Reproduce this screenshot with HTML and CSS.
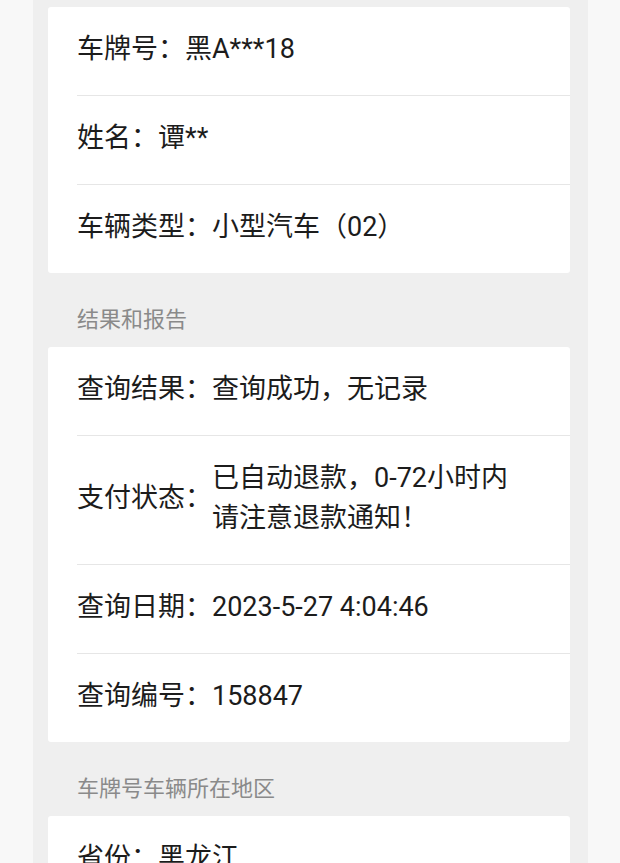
FILE: index.html
```html
<!DOCTYPE html>
<html lang="zh-CN">
  <head>
    <meta charset="UTF-8" />
    <meta name="viewport" content="width=device-width, initial-scale=1.0" />
    <title>查询结果</title>
    <link rel="stylesheet" href="styles.css">
  </head>
  <body>
    <div class="page">
      <div class="card">
        <div class="row">
          <span class="label">车牌号：</span>
          <span class="value">黑A***18</span>
        </div>
        <div class="row">
          <span class="label">姓名：</span>
          <span class="value">谭**</span>
        </div>
        <div class="row">
          <span class="label">车辆类型：</span>
          <span class="value">小型汽车（02）</span>
        </div>
      </div>

      <div class="group_title">结果和报告</div>
      <div class="card">
        <div class="row">
          <span class="label">查询结果：</span>
          <span class="value">查询成功，无记录</span>
        </div>
        <div class="row">
          <span class="label">支付状态：</span>
          <span class="value">已自动退款，0-72小时内<br />请注意退款通知！</span>
        </div>
        <div class="row">
          <span class="label">查询日期：</span>
          <span class="value">2023-5-27 4:04:46</span>
        </div>
        <div class="row">
          <span class="label">查询编号：</span>
          <span class="value">158847</span>
        </div>
      </div>

      <div class="group_title">车牌号车辆所在地区</div>
      <div class="card">
        <div class="row">
          <span class="label">省份：</span>
          <span class="value">黑龙江</span>
        </div>
      </div>
    </div>
  </body>
</html>
```

FILE: styles.css
```css
html,
body {
  margin: 0;
  padding: 0;
}
body {
  background-color: #f8f8f8;
  font-family: Roboto, "Noto Sans CJK SC", sans-serif;
  color: #1c1c1c;
}
.page {
  background-color: #efefef;
  margin: 0 32px 0 33px;
  padding: 7px 18px 0 15px;
}
.card {
  background-color: #fff;
  border-radius: 3px;
}
.row {
  display: flex;
  align-items: center;
  margin-left: 29px;
  padding: 22px 0 26px;
  border-bottom: 1px solid #e6e6e6;
  font-size: 27px;
  line-height: 40px;
}
.row:last-child {
  border-bottom: none;
}
.label {
  flex: none;
}
.value {
  flex: 1;
}
.group_title {
  padding: 32px 0 12px 29px;
  font-size: 22px;
  line-height: 30px;
  color: #8a8a8a;
}
```
